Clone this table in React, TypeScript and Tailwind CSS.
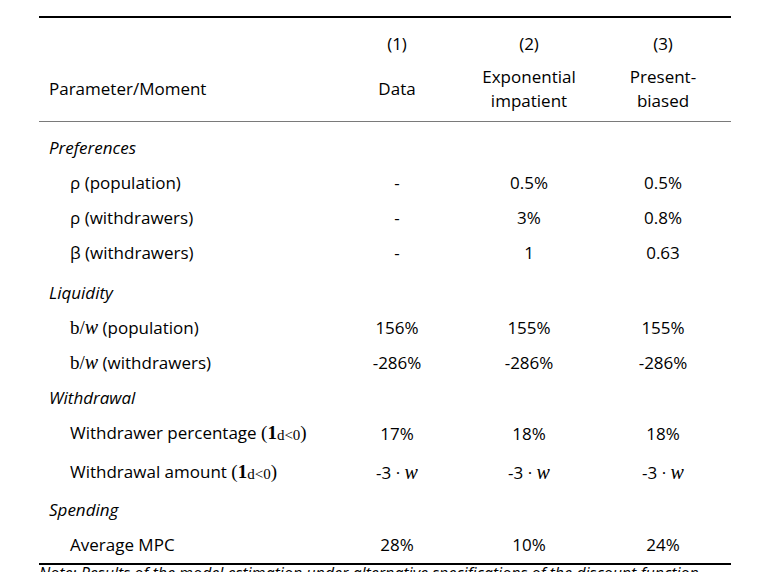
import React from 'react';

const sans = "font-['Open_Sans','Noto_Sans',sans-serif]";
const serif = "font-['Liberation_Serif','DejaVu_Serif',serif]";

// small math helpers
const W = () => <span className={`${serif} italic text-[20px]`}>w</span>;
const BW = () => (
  <span className={`${serif} text-[19px]`}>
    b/<span className="italic text-[20px]">w</span>
  </span>
);
const Ind = () => (
  <span className={`${serif} text-[19px]`}>
    (<span className="font-bold">1</span>
    <sub className="text-[15px] relative top-[1px]">d&lt;0</sub>)
  </span>
);

type Row = {
  label: React.ReactNode;
  vals?: React.ReactNode[];
  section?: boolean;
  h: string;
};

const rows: Row[] = [
  { label: 'Preferences', section: true, h: 'h-[35px]' },
  { label: <>ρ (population)</>, vals: ['-', '0.5%', '0.5%'], h: 'h-[35px]' },
  { label: <>ρ (withdrawers)</>, vals: ['-', '3%', '0.8%'], h: 'h-[35px]' },
  { label: <>β&nbsp;(withdrawers)</>, vals: ['-', '1', '0.63'], h: 'h-[35px]' },
  { label: 'Liquidity', section: true, h: 'h-[35px] mt-[5px]' },
  { label: <><BW /> (population)</>, vals: ['156%', '155%', '155%'], h: 'h-[35px]' },
  { label: <><BW /> (withdrawers)</>, vals: ['-286%', '-286%', '-286%'], h: 'h-[35px]' },
  { label: 'Withdrawal', section: true, h: 'h-[35px]' },
  { label: <>Withdrawer percentage <Ind /></>, vals: ['17%', '18%', '18%'], h: 'h-[37px]' },
  {
    label: <>Withdrawal amount <Ind /></>,
    vals: [<>-3 · <W /></>, <>-3 · <W /></>, <>-3 · <W /></>],
    h: 'h-[40px]',
  },
  { label: 'Spending', section: true, h: 'h-[35px]' },
  { label: 'Average MPC', vals: ['28%', '10%', '24%'], h: 'h-[35px]' },
];

export default function App() {
  return (
    <div className={`w-[772px] h-[572px] overflow-hidden bg-white text-black text-[17px] ${sans}`}>
      <div className="ml-[39px] w-[692px] pt-[16px]">
        {/* ── Top rule ───────────────────────────── */}
        <div className="h-[1.5px] bg-black" />

        {/* ── Header ─────────────────────────────── */}
        <div className="flex h-[52px] items-center">
          <div className="w-[292px]" />
          <div className="w-[132px] text-center">(1)</div>
          <div className="w-[132px] text-center">(2)</div>
          <div className="w-[136px] text-center">(3)</div>
        </div>
        <div className="flex h-[38px] items-center leading-[24px]">
          <div className="w-[292px] pl-[10px]">Parameter/Moment</div>
          <div className="w-[132px] text-center">Data</div>
          <div className="w-[132px] text-center">Exponential<br />impatient</div>
          <div className="w-[136px] text-center">Present-<br />biased</div>
        </div>
        <div className="h-[13px]" />
        <div className="h-[1.5px] bg-[#7a7a7a]" />

        {/* ── Body ───────────────────────────────── */}
        <div className="pt-[8px]">
          {rows.map((r, i) => (
            <div key={i} className={`flex items-center ${r.h}`}>
              <div className={`w-[292px] whitespace-nowrap ${r.section ? 'pl-[10px] italic' : 'pl-[31px]'}`}>
                {r.label}
              </div>
              {r.vals && (
                <>
                  <div className="w-[132px] text-center whitespace-nowrap">{r.vals[0]}</div>
                  <div className="w-[132px] text-center whitespace-nowrap">{r.vals[1]}</div>
                  <div className="w-[136px] text-center whitespace-nowrap">{r.vals[2]}</div>
                </>
              )}
            </div>
          ))}
        </div>

        {/* ── Bottom rule + note ─────────────────── */}
        <div className="h-[1.5px] bg-black mt-[1px]" />
        <p className="italic leading-[16px] text-[16px] whitespace-nowrap">
          Note: Results of the model estimation under alternative specifications of the discount function.
        </p>
      </div>
    </div>
  );
}
